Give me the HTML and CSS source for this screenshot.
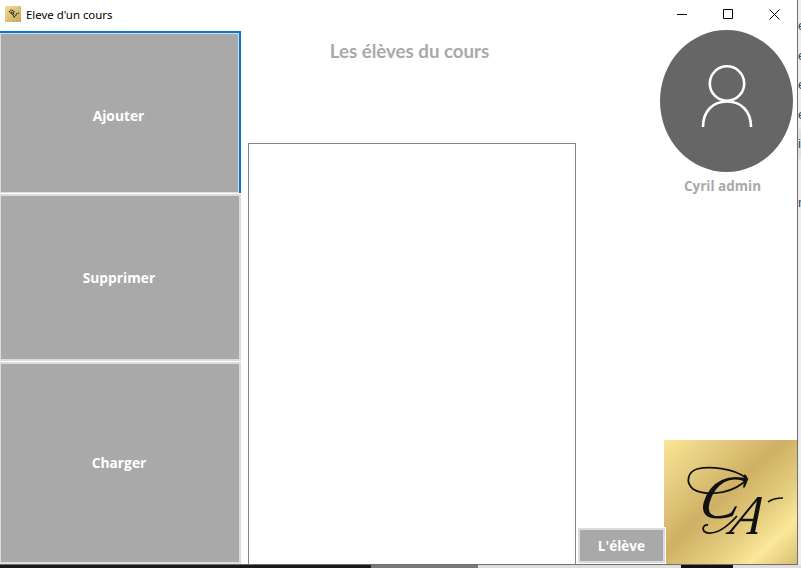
FILE: index.html
```html
<!DOCTYPE html>
<html lang="fr">
<head>
  <meta charset="UTF-8" />
  <meta name="viewport" content="width=device-width, initial-scale=1.0"/>
  <title>Eleve d'un cours</title>
  <link rel="stylesheet" href="styles.css">
</head>
<body>
  <div class="screen">
    <div class="window">
      <div class="titlebar">
        <svg class="app-icon" width="16" height="16" viewBox="0 0 16 16">
          <defs>
            <linearGradient id="goldSmall" x1="0" y1="0" x2="1" y2="1">
              <stop offset="0" stop-color="#f3df93"/>
              <stop offset="1" stop-color="#c4a75c"/>
            </linearGradient>
          </defs>
          <rect width="16" height="16" fill="url(#goldSmall)"/>
          <path d="M4 6l2-2 3 1 0 2-3 0 2 2 1 2 2-2 0-1 3-1M6 6l2 1 1 2" fill="none" stroke="#222" stroke-width="1.2" stroke-dasharray="1.3 .7"/>
        </svg>
        <span class="title-text">Eleve d'un cours</span>
        <div class="controls">
          <span class="control"><svg width="10" height="10" viewBox="0 0 10 10"><path d="M0 5.5h10" stroke="#000" fill="none"/></svg></span>
          <span class="control"><svg width="10" height="10" viewBox="0 0 10 10"><path d="M.5.5h9v9h-9z" stroke="#000" fill="none"/></svg></span>
          <span class="control"><svg width="11" height="11" viewBox="0 0 11 11"><path d="M.5.5l10 10M10.5.5l-10 10" stroke="#000" fill="none"/></svg></span>
        </div>
      </div>

      <div class="content">
        <div class="sidebar">
          <button class="side-btn side-btn-focus">Ajouter</button>
          <button class="side-btn side-btn-mid">Supprimer</button>
          <button class="side-btn side-btn-last">Charger</button>
        </div>

        <div class="center">
          <h1 class="heading">Les élèves du cours</h1>
          <div class="listbox"></div>
        </div>

        <div class="right">
          <div class="profile">
            <svg class="avatar" width="133" height="142" viewBox="0 0 133 142">
              <ellipse cx="66.5" cy="71" rx="66.5" ry="71" fill="#666"/>
              <circle cx="67" cy="53.5" r="17.2" fill="none" stroke="#fff" stroke-width="2.6"/>
              <path d="M43 97c0-16 10-25.500 24-25.500s24 9.500 24 25.500" fill="none" stroke="#fff" stroke-width="2.6"/>
            </svg>
            <div class="user-name">Cyril admin</div>
          </div>
          <div class="bottom-row">
            <button class="student-btn">L'élève</button>
            <svg class="logo" width="133" height="124" viewBox="0 0 133 124">
              <defs>
                <linearGradient id="gold" x1="0" y1="0" x2="1" y2="1">
                  <stop offset="0" stop-color="#fbe794"/>
                  <stop offset=".18" stop-color="#e8d084"/>
                  <stop offset=".45" stop-color="#cfb064"/>
                  <stop offset=".68" stop-color="#e6cf80"/>
                  <stop offset=".82" stop-color="#fce89a"/>
                  <stop offset="1" stop-color="#d9bf72"/>
                </linearGradient>
              </defs>
              <rect width="133" height="124" fill="url(#gold)"/>
              <text class="logo-letter" font-size="62" transform="translate(32 78) skewX(-15)">C</text>
              <text class="logo-letter" font-size="56" transform="translate(64 94) skewX(-20) scale(.85 1)">A</text>
              <path d="M82 38C70 28 45 26 33 29 24 32 21 42 29 49 38 55 62 56 79 43 83 40 84 37 80 35" fill="none" stroke="#111" stroke-width="1.8"/>
              <path d="M44 85C38 84 37 92 44 93 54 94 64 86 73 76" fill="none" stroke="#111" stroke-width="1.8"/>
              <path d="M119 58C112 58 108 59 104 62" fill="none" stroke="#111" stroke-width="1.6"/>
            </svg>
          </div>
        </div>
      </div>
    </div>

    <div class="behind">
      <span class="behind-line">e</span>
      <span class="behind-line">e</span>
      <span class="behind-line">e</span>
      <span class="behind-line">e</span>
      <span class="behind-line behind-shade">i</span>
      <span class="behind-line"></span>
      <span class="behind-line">n</span>
    </div>
  </div>

  <div class="taskbar">
    <span class="task task-dark"></span>
    <span class="task task-grey"></span>
    <span class="task task-light"></span>
    <span class="task task-black"></span>
    <span class="task task-end"></span>
  </div>
</body>
</html>
```

FILE: styles.css
```css
* {
  box-sizing: border-box;
}
html, body {
  margin: 0;
  height: 568px;
  overflow: hidden;
}
body {
  font-family: "Open Sans", Arial, sans-serif;
  background: #e6e6e6;
}
.screen {
  display: flex;
  height: 565px;
}
.window {
  width: 798px;
  height: 565px;
  background: #fff;
  border-right: 1px solid #6f6f6f;
  border-bottom: 1px solid #6f6f6f;
  display: flex;
  flex-direction: column;
}
.titlebar {
  display: flex;
  align-items: center;
  height: 30px;
  padding: 0 0 2px 5px;
  flex-shrink: 0;
}
.app-icon {
  margin-right: 5px;
}
.title-text {
  font-family: "Noto Sans", Arial, sans-serif;
  font-size: 11.4px;
  color: #000;
}
.controls {
  display: flex;
  margin-left: auto;
  height: 30px;
}
.control {
  width: 46px;
  display: flex;
  align-items: center;
  justify-content: center;
}
.content {
  flex: 1;
  display: flex;
  min-height: 0;
}
.sidebar {
  width: 241px;
  padding-top: 1px;
  display: flex;
  flex-direction: column;
  gap: 1px;
  flex-shrink: 0;
}
.side-btn {
  width: 241px;
  background: #a9a9a9;
  color: #fff;
  font-family: "Open Sans", Arial, sans-serif;
  font-size: 13.8px;
  font-weight: 700;
  border-style: solid;
  border-color: #dcdcdc;
  border-width: 2px 2px 2px 1px;
  padding: 0 2px 0 0;
}
.side-btn-focus {
  height: 162px;
  border-width: 2px 2px 0 0;
  border-color: #0078d7;
  box-shadow: inset 1px 1px 0 #dcdcdc, inset -1px -1px 0 #dcdcdc;
  padding-top: 4px;
}
.side-btn-mid {
  height: 167px;
}
.side-btn-last {
  flex: 1;
  padding-bottom: 2px;
}
.center {
  width: 328px;
  margin-left: 7px;
  display: flex;
  flex-direction: column;
  flex-shrink: 0;
}
.heading {
  height: 113px;
  margin: 0;
  padding: 10px 5px 0 0;
  font-family: Lato, Arial, sans-serif;
  font-size: 18.7px;
  font-weight: 700;
  color: #a9a9a9;
  text-align: center;
}
.listbox {
  flex: 1;
  background: #fff;
  border: 1px solid #828790;
  border-bottom: 0;
}
.right {
  flex: 1;
  display: flex;
  flex-direction: column;
  justify-content: space-between;
}
.profile {
  padding-left: 84px;
}
.avatar {
  display: block;
}
.user-name {
  width: 125px;
  margin-top: 5px;
  font-size: 13.5px;
  font-weight: 700;
  color: #a9a9a9;
  text-align: center;
}
.bottom-row {
  display: flex;
  align-items: flex-end;
  padding-left: 2px;
}
.student-btn {
  position: relative;
  width: 87px;
  height: 35px;
  margin: 0 -1px 1px 0;
  background: #a9a9a9;
  color: #fff;
  font-family: "Open Sans", Arial, sans-serif;
  font-size: 13.6px;
  font-weight: 700;
  border: 2px solid #dcdcdc;
  box-shadow: 0 0 0 1px #fff;
  padding: 0;
}
.logo {
  display: block;
  flex-shrink: 0;
}
.logo-letter {
  font-family: "Liberation Serif", serif;
  font-style: italic;
  fill: #111;
}
.behind {
  flex: 1;
  display: flex;
  flex-direction: column;
  padding-top: 11px;
  overflow: hidden;
  background: #eee;
}
.behind-line {
  height: 29.5px;
  line-height: 29.5px;
  font-family: "Liberation Sans", Arial, sans-serif;
  font-size: 13px;
  color: #444;
}
.behind-shade {
  background: #e2e2e2;
}
.taskbar {
  display: flex;
  height: 3px;
}
.task-dark {
  width: 371px;
  background: #1a1a1a;
}
.task-grey {
  width: 107px;
  background: #7a7a7a;
}
.task-light {
  width: 203px;
  background: #dedede;
}
.task-black {
  width: 52px;
  background: #111;
}
.task-end {
  flex: 1;
  background: #dedede;
}
```
